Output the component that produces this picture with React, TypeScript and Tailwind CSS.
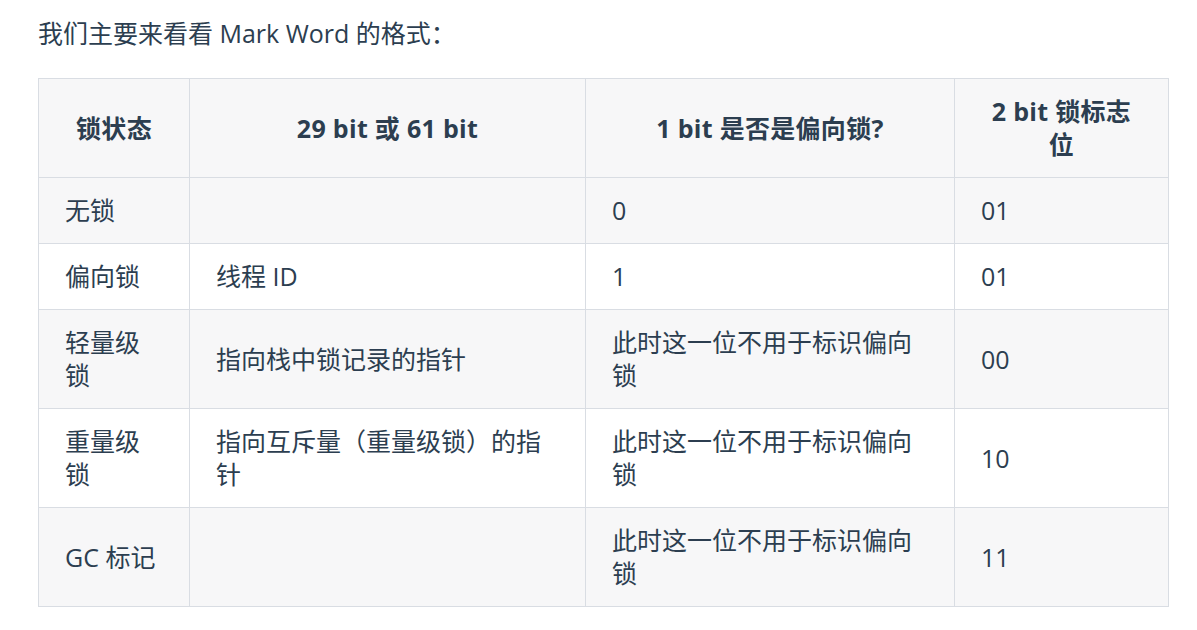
const rows = [
  { state: '无锁', bits: '', biased: '0', flag: '01' },
  { state: '偏向锁', bits: '线程 ID', biased: '1', flag: '01' },
  { state: '轻量级锁', bits: '指向栈中锁记录的指针', biased: '此时这一位不用于标识偏向锁', flag: '00' },
  { state: '重量级锁', bits: '指向互斥量（重量级锁）的指针', biased: '此时这一位不用于标识偏向锁', flag: '10' },
  { state: 'GC 标记', bits: '', biased: '此时这一位不用于标识偏向锁', flag: '11' }
];

const headers = ['锁状态', '29 bit 或 61 bit', '1 bit 是否是偏向锁?', '2 bit 锁标志位'];
const widths = ['w-[151px]', 'w-[396px]', 'w-[369px]', 'w-[214px]'];

export default function App() {
  return (
    <div
      className="min-h-screen bg-white px-[38px] pt-[17px] text-[#2c3e50] text-[25px] leading-[33px]"
      style={{ fontFamily: '"Open Sans", "Noto Sans CJK SC", sans-serif' }}
    >
      <p className="mb-[28px]">我们主要来看看 Mark Word 的格式：</p>
      <table className="w-[1130px] table-fixed border-collapse">
        <colgroup>
          {widths.map((w, i) => (
            <col key={i} className={w} />
          ))}
        </colgroup>
        <thead>
          <tr className="bg-[#f7f7f8]">
            {headers.map((h, i) => (
              <th
                key={i}
                className="border border-[#d9dde3] px-[26px] py-[16px] text-center font-bold tracking-[0.3px] align-middle"
              >
                {h}
              </th>
            ))}
          </tr>
        </thead>
        <tbody>
          {rows.map((row, index) => (
            <tr key={index} className={index % 2 === 0 ? 'bg-[#f7f7f8]' : 'bg-white'}>
              {[row.state, row.bits, row.biased, row.flag].map((cell, ci) => (
                <td
                  key={ci}
                  className="border border-[#d9dde3] px-[26px] py-[16px] text-left align-middle"
                >
                  {cell}
                </td>
              ))}
            </tr>
          ))}
        </tbody>
      </table>
    </div>
  );
}
